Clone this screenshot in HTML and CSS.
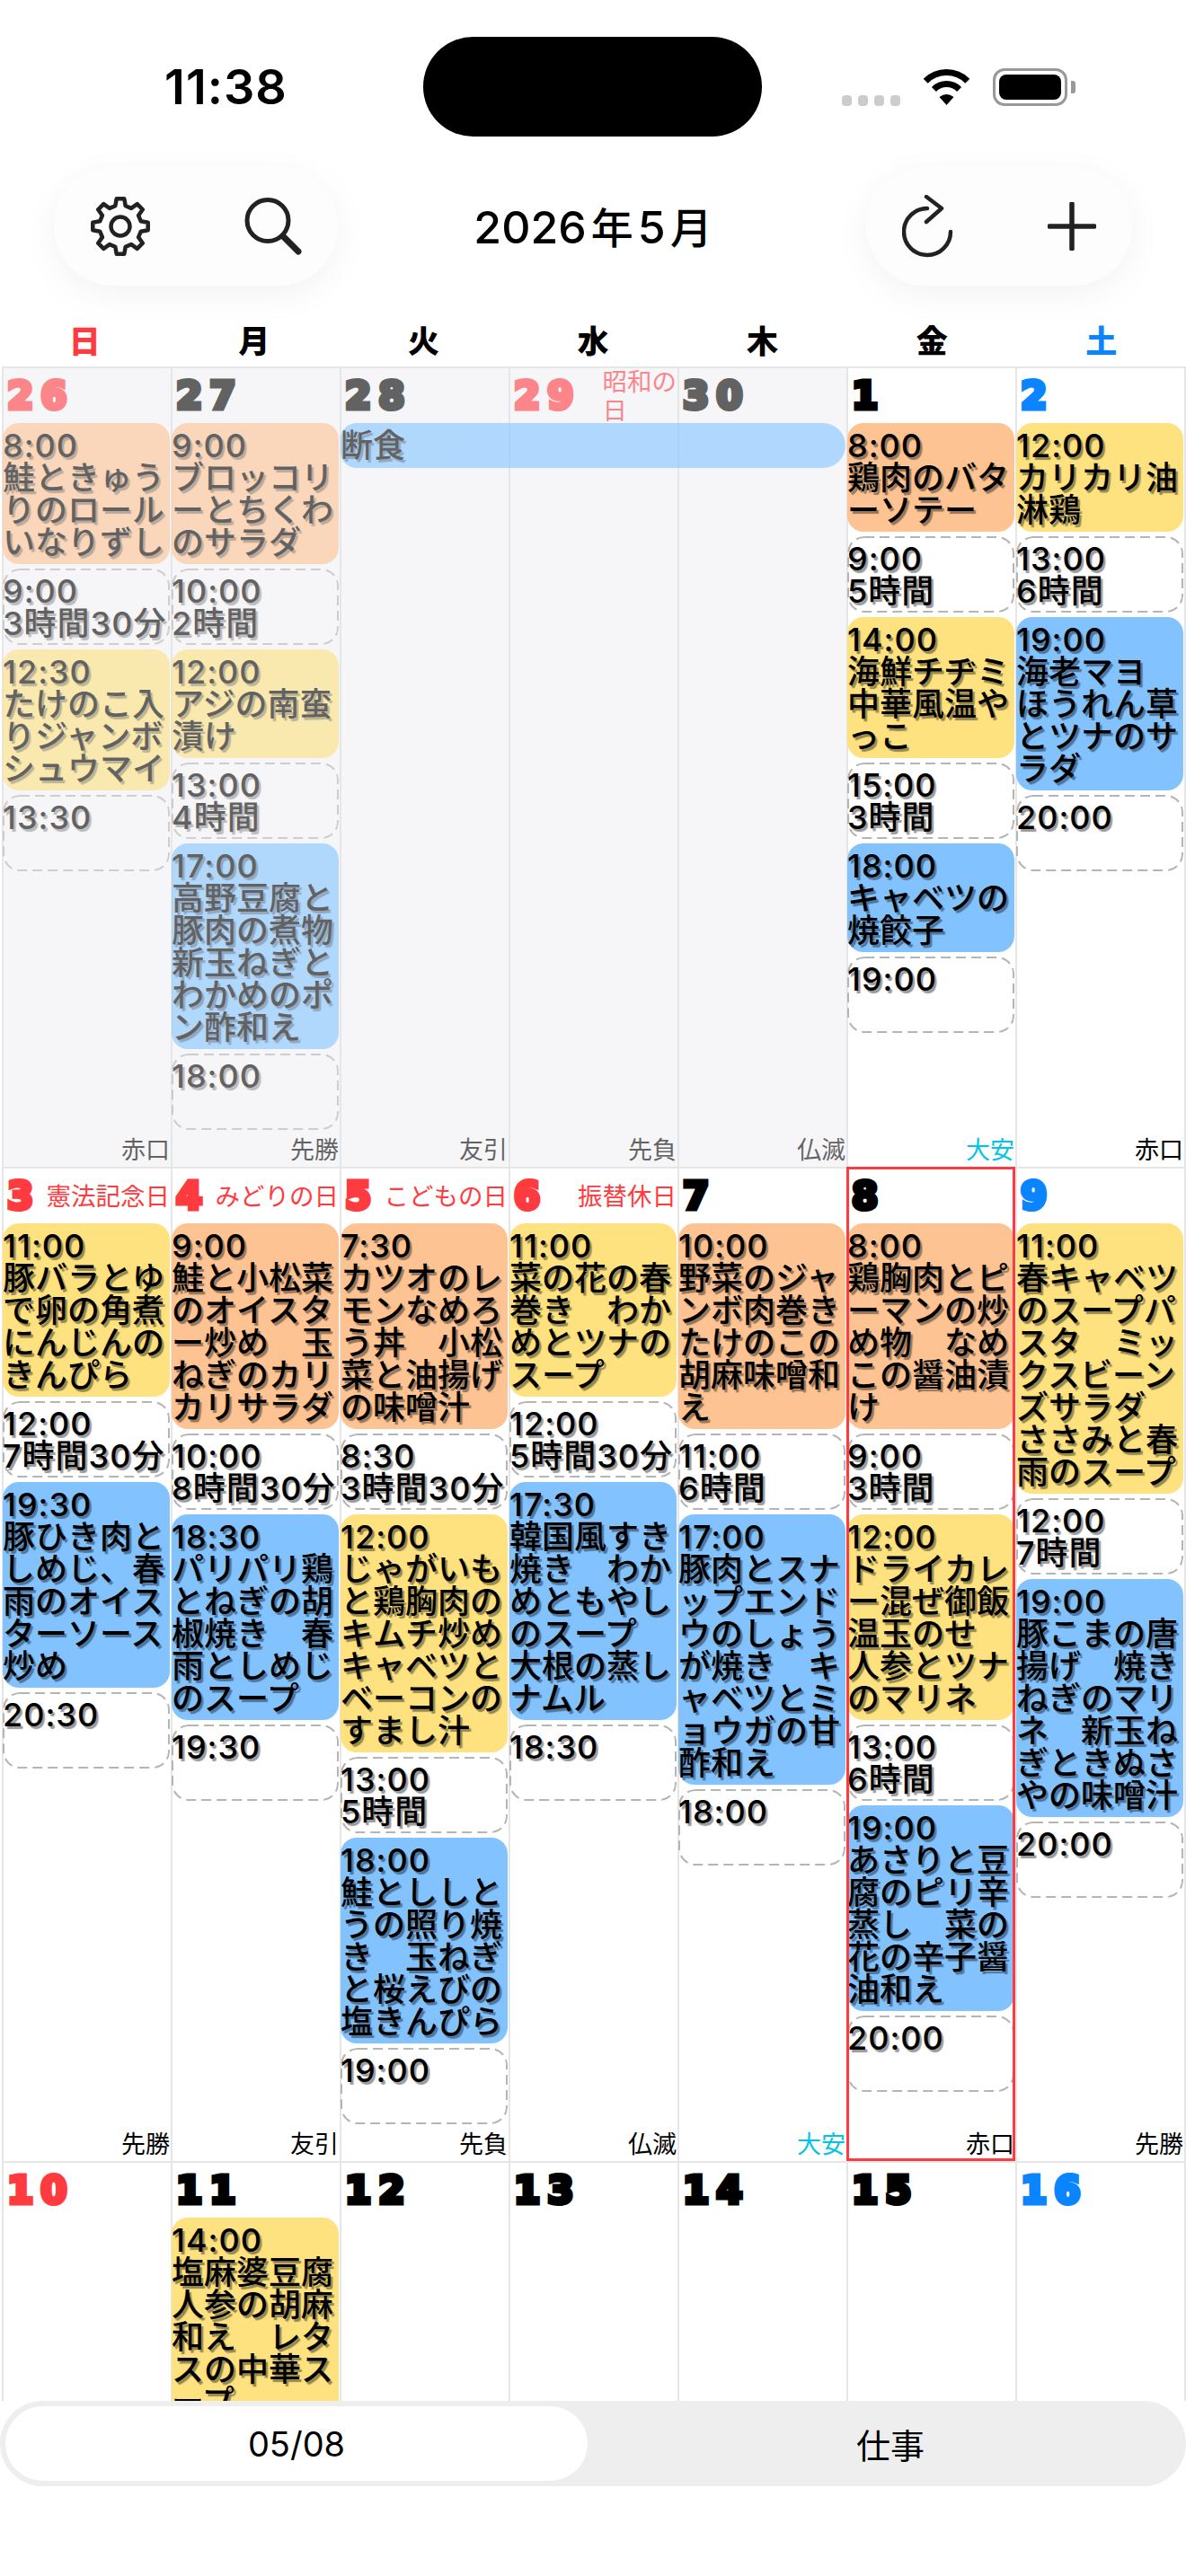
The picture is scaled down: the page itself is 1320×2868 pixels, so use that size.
FILE: index.html
```html
<!DOCTYPE html>
<html lang="ja">
<head>
  <meta charset="UTF-8">
  <meta name="viewport" content="width=device-width, initial-scale=1.0">
  <title>カレンダー</title>
  <link rel="stylesheet" href="styles.css">
</head>
<body>
  <div class="app">
    <!-- Status bar -->
    <div class="status">
      <div class="clock">11:38</div>
      <div class="island"></div>
      <div class="status-icons">
        <div class="signal"><i></i><i></i><i></i><i></i></div>
        <svg class="wifi" viewBox="0 0 57 41" width="57" height="41">
          <path d="M5.2 14.2A33 33 0 0 1 51.8 14.2M14.4 23.4A20 20 0 0 1 42.6 23.4" fill="none" stroke="#000" stroke-width="7"/>
          <path d="M28.5 41L20.5 32Q28.5 26 36.5 32Z" fill="#000"/>
        </svg>
        <div class="battery"><i></i></div>
        <div class="battery-cap"></div>
      </div>
    </div>

    <!-- Header -->
    <header class="topbar">
      <div class="pill">
        <svg viewBox="0 0 68 68" width="68" height="68" fill="none" stroke="#222" stroke-width="4.5" stroke-linejoin="round">
          <polygon points="39.7,11.2 38.3,3.3 29.7,3.3 28.3,11.2 21.9,13.9 15.3,9.2 9.2,15.3 13.9,21.9 11.2,28.3 3.3,29.7 3.3,38.3 11.2,39.7 13.9,46.1 9.2,52.7 15.3,58.8 21.9,54.1 28.3,56.8 29.7,64.7 38.3,64.7 39.7,56.8 46.1,54.1 52.7,58.8 58.8,52.7 54.1,46.1 56.8,39.7 64.7,38.3 64.7,29.7 56.8,28.3 54.1,21.9 58.8,15.3 52.7,9.2 46.1,13.9"/>
          <circle cx="34" cy="34" r="10.5"/>
        </svg>
        <svg viewBox="0 0 64 64" width="64" height="64" fill="none" stroke="#222" stroke-linecap="round">
          <circle cx="26" cy="25.500" r="23" stroke-width="5"/>
          <line x1="43" y1="43" x2="60" y2="60" stroke-width="7"/>
        </svg>
      </div>
      <h1 class="month">2026<span class="unit">年</span>5<span class="unit">月</span></h1>
      <div class="pill pill-right">
        <svg viewBox="0 0 58 70" width="58" height="70" fill="none" stroke="#222" stroke-width="4.500" stroke-linecap="round" stroke-linejoin="round">
          <path d="M28 15A26 26 0 1 0 54 41"/>
          <path d="M27 2L44 15L27 30"/>
        </svg>
        <svg viewBox="0 0 54 54" width="54" height="54" fill="none" stroke="#222" stroke-width="5.500" stroke-linecap="round">
          <path d="M27 2V52M2 27H52"/>
        </svg>
      </div>
    </header>

    <!-- Weekdays -->
    <div class="weekdays">
      <div class="sun">日</div><div>月</div><div>火</div><div>水</div><div>木</div><div>金</div><div class="sat">土</div>
    </div>

    <!-- Calendar -->
    <div class="calendar">
      <div class="cell past">
        <div class="head sun"><span class="num">26</span></div>
        <div class="ev orange"><div>8:00</div>鮭ときゅうりのロールいなりずし</div>
        <div class="ev slot"><div>9:00</div><div>3時間30分</div></div>
        <div class="ev yellow"><div>12:30</div>たけのこ入りジャンボシュウマイ</div>
        <div class="ev slot"><div>13:30</div></div>
        <div class="rokuyo">赤口</div>
      </div>
      <div class="cell past">
        <div class="head"><span class="num">27</span></div>
        <div class="ev orange"><div>9:00</div>ブロッコリーとちくわのサラダ</div>
        <div class="ev slot"><div>10:00</div><div>2時間</div></div>
        <div class="ev yellow"><div>12:00</div>アジの南蛮漬け</div>
        <div class="ev slot"><div>13:00</div><div>4時間</div></div>
        <div class="ev blue"><div>17:00</div>高野豆腐と豚肉の煮物新玉ねぎとわかめのポン酢和え</div>
        <div class="ev slot"><div>18:00</div></div>
        <div class="rokuyo">先勝</div>
      </div>
      <div class="cell past">
        <div class="head"><span class="num">28</span></div>
        <div class="banner">断食</div>
        <div class="rokuyo">友引</div>
      </div>
      <div class="cell past">
        <div class="head sun"><span class="num">29</span><span class="holiday">昭和の<br>日</span></div>
        <div class="rokuyo">先負</div>
      </div>
      <div class="cell past">
        <div class="head"><span class="num">30</span></div>
        <div class="rokuyo">仏滅</div>
      </div>
      <div class="cell">
        <div class="head"><span class="num">1</span></div>
        <div class="ev orange"><div>8:00</div>鶏肉のバターソテー</div>
        <div class="ev slot"><div>9:00</div><div>5時間</div></div>
        <div class="ev yellow"><div>14:00</div>海鮮チヂミ中華風温やっこ</div>
        <div class="ev slot"><div>15:00</div><div>3時間</div></div>
        <div class="ev blue"><div>18:00</div>キャベツの焼餃子</div>
        <div class="ev slot"><div>19:00</div></div>
        <div class="rokuyo taian">大安</div>
      </div>
      <div class="cell">
        <div class="head sat"><span class="num">2</span></div>
        <div class="ev yellow"><div>12:00</div>カリカリ油淋鶏</div>
        <div class="ev slot"><div>13:00</div><div>6時間</div></div>
        <div class="ev blue"><div>19:00</div>海老マヨ　ほうれん草とツナのサラダ</div>
        <div class="ev slot"><div>20:00</div></div>
        <div class="rokuyo">赤口</div>
      </div>

      <div class="cell">
        <div class="head sun"><span class="num">3</span><span class="holiday">憲法記念日</span></div>
        <div class="ev yellow"><div>11:00</div>豚バラとゆで卵の角煮にんじんのきんぴら</div>
        <div class="ev slot"><div>12:00</div><div>7時間30分</div></div>
        <div class="ev blue"><div>19:30</div>豚ひき肉としめじ、春雨のオイスターソース炒め</div>
        <div class="ev slot"><div>20:30</div></div>
        <div class="rokuyo">先勝</div>
      </div>
      <div class="cell">
        <div class="head sun"><span class="num">4</span><span class="holiday">みどりの日</span></div>
        <div class="ev orange"><div>9:00</div>鮭と小松菜のオイスター炒め　玉ねぎのカリカリサラダ</div>
        <div class="ev slot"><div>10:00</div><div>8時間30分</div></div>
        <div class="ev blue"><div>18:30</div>パリパリ鶏とねぎの胡椒焼き　春雨としめじのスープ</div>
        <div class="ev slot"><div>19:30</div></div>
        <div class="rokuyo">友引</div>
      </div>
      <div class="cell">
        <div class="head sun"><span class="num">5</span><span class="holiday">こどもの日</span></div>
        <div class="ev orange"><div>7:30</div>カツオのレモンなめろう丼　小松菜と油揚げの味噌汁</div>
        <div class="ev slot"><div>8:30</div><div>3時間30分</div></div>
        <div class="ev yellow"><div>12:00</div>じゃがいもと鶏胸肉のキムチ炒めキャベツとベーコンのすまし汁</div>
        <div class="ev slot"><div>13:00</div><div>5時間</div></div>
        <div class="ev blue"><div>18:00</div>鮭とししとうの照り焼き　玉ねぎと桜えびの塩きんぴら</div>
        <div class="ev slot"><div>19:00</div></div>
        <div class="rokuyo">先負</div>
      </div>
      <div class="cell">
        <div class="head sun"><span class="num">6</span><span class="holiday">振替休日</span></div>
        <div class="ev yellow"><div>11:00</div>菜の花の春巻き　わかめとツナのスープ</div>
        <div class="ev slot"><div>12:00</div><div>5時間30分</div></div>
        <div class="ev blue"><div>17:30</div>韓国風すき焼き　わかめともやしのスープ　大根の蒸しナムル</div>
        <div class="ev slot"><div>18:30</div></div>
        <div class="rokuyo">仏滅</div>
      </div>
      <div class="cell">
        <div class="head"><span class="num">7</span></div>
        <div class="ev orange"><div>10:00</div>野菜のジャンボ肉巻きたけのこの胡麻味噌和え</div>
        <div class="ev slot"><div>11:00</div><div>6時間</div></div>
        <div class="ev blue"><div>17:00</div>豚肉とスナップエンドウのしょうが焼き　キャベツとミョウガの甘酢和え</div>
        <div class="ev slot"><div>18:00</div></div>
        <div class="rokuyo taian">大安</div>
      </div>
      <div class="cell today">
        <div class="head"><span class="num">8</span></div>
        <div class="ev orange"><div>8:00</div>鶏胸肉とピーマンの炒め物　なめこの醤油漬け</div>
        <div class="ev slot"><div>9:00</div><div>3時間</div></div>
        <div class="ev yellow"><div>12:00</div>ドライカレー混ぜ御飯温玉のせ　人参とツナのマリネ</div>
        <div class="ev slot"><div>13:00</div><div>6時間</div></div>
        <div class="ev blue"><div>19:00</div>あさりと豆腐のピリ辛蒸し　菜の花の辛子醤油和え</div>
        <div class="ev slot"><div>20:00</div></div>
        <div class="rokuyo">赤口</div>
      </div>
      <div class="cell">
        <div class="head sat"><span class="num">9</span></div>
        <div class="ev yellow"><div>11:00</div>春キャベツのスープパスタ　ミックスビーンズサラダ　ささみと春雨のスープ</div>
        <div class="ev slot"><div>12:00</div><div>7時間</div></div>
        <div class="ev blue"><div>19:00</div>豚こまの唐揚げ　焼きねぎのマリネ　新玉ねぎときぬさやの味噌汁</div>
        <div class="ev slot"><div>20:00</div></div>
        <div class="rokuyo">先勝</div>
      </div>

      <div class="cell"><div class="head sun"><span class="num">10</span></div></div>
      <div class="cell">
        <div class="head"><span class="num">11</span></div>
        <div class="ev yellow"><div>14:00</div>塩麻婆豆腐人参の胡麻和え　レタスの中華スープ</div>
      </div>
      <div class="cell"><div class="head"><span class="num">12</span></div></div>
      <div class="cell"><div class="head"><span class="num">13</span></div></div>
      <div class="cell"><div class="head"><span class="num">14</span></div></div>
      <div class="cell"><div class="head"><span class="num">15</span></div></div>
      <div class="cell"><div class="head sat"><span class="num">16</span></div></div>
    </div>

    <!-- Segment control -->
    <div class="segment">
      <div class="seg-item active">05/08</div>
      <div class="seg-item seg-work">仕事</div>
    </div>
    <div class="home-space"></div>
  </div>
</body>
</html>
```

FILE: styles.css
```css
* {
  box-sizing: border-box;
}

body {
  margin: 0;
  background-color: white;
  color: black;
  font-family: Inter, "Noto Sans CJK JP", sans-serif;
}

.app {
  height: 2868px;
  display: flex;
  flex-direction: column;
  overflow: hidden;
}

/* Status bar */
.status {
  display: flex;
  align-items: center;
  padding-top: 41px;
  flex-shrink: 0;
}

.clock {
  width: 471px;
  padding-left: 32px;
  text-align: center;
  font-size: 54px;
  font-weight: 600;
  letter-spacing: 1px;
}

.island {
  width: 377px;
  height: 111px;
  background-color: black;
  border-radius: 56px;
}

.status-icons {
  display: flex;
  align-items: center;
  padding-left: 89px;
}

.signal {
  display: flex;
  gap: 7px;
  align-self: flex-end;
  margin-right: 23px;
}

.signal i {
  width: 11px;
  height: 12px;
  background-color: #ccc;
  border-radius: 4px;
}

.battery {
  width: 83px;
  height: 42px;
  margin-left: 23px;
  padding: 4px;
  border: 3px solid #999;
  border-radius: 13px;
}

.battery i {
  display: block;
  height: 100%;
  background-color: black;
  border-radius: 8px;
}

.battery-cap {
  width: 5px;
  height: 14px;
  margin-left: 4px;
  background-color: #999;
  border-radius: 0 3px 3px 0;
}

/* Header */
.topbar {
  display: grid;
  grid-template-columns: 1fr auto 1fr;
  align-items: center;
  margin-top: 34px;
  padding: 0 60px;
  flex-shrink: 0;
}

.pill {
  width: 316px;
  height: 132px;
  padding: 0 40px;
  display: flex;
  align-items: center;
  justify-content: space-between;
  background-color: #fdfdfd;
  border-radius: 66px;
  box-shadow: 0 10px 40px rgba(0, 0, 0, 0.05);
}

.pill-right {
  width: 296px;
  justify-self: end;
}

.month {
  margin: 0 0 3px;
  font-size: 50px;
  font-weight: 500;
  white-space: nowrap;
}

.unit {
  margin: 0 5px;
  font-size: 47px;
}

.unit:last-child {
  margin-right: 0;
}

.weekdays {
  display: grid;
  grid-template-columns: repeat(7, 1fr);
  margin-top: 37px;
  height: 53px;
  flex-shrink: 0;
  font-size: 35px;
  font-weight: 900;
  line-height: 50px;
  text-align: center;
}

.sun {
  color: #ff3b40;
}

.sat {
  color: #0a84ff;
}

/* Calendar */
.calendar {
  flex: 1;
  min-height: 0;
  overflow: hidden;
  display: grid;
  grid-template-columns: repeat(7, 188px);
  grid-auto-rows: max-content;
  padding: 0 2px;
}

.cell {
  min-width: 0;
  display: flex;
  flex-direction: column;
  border-top: 2px solid #e6e6e8;
  border-left: 2px solid #e6e6e8;
}

.cell:nth-child(7n) {
  border-right: 2px solid #e6e6e8;
  margin-right: -2px;
}

.past {
  background-color: #f6f6f9;
}

.past > * {
  opacity: 0.6;
}

.today {
  outline: 3px solid #ff3b40;
  outline-offset: -3px;
  z-index: 1;
}

.head {
  height: 61px;
  flex-shrink: 0;
  display: flex;
  align-items: center;
  justify-content: space-between;
  padding: 0 1px 0 4px;
}

.num {
  flex-shrink: 0;
  font-family: "DejaVu Sans", sans-serif;
  font-size: 42px;
  font-weight: 700;
  line-height: 1;
  letter-spacing: 8px;
  -webkit-text-stroke: 5px currentColor;
}

.holiday {
  margin-left: auto;
  font-size: 27.5px;
  line-height: 32px;
}

.ev {
  margin: 0 1px 5px -1px;
  padding: 7px 0 6px;
  font-size: 36px;
  font-weight: 500;
  line-height: 36px;
  word-break: break-all;
  line-break: anywhere;
  text-shadow: 2.5px 2.5px 1px rgba(0, 0, 0, 0.4);
  border-radius: 18px;
}

.ev div {
  letter-spacing: 1px;
  white-space: nowrap;
}

.orange {
  background-color: #fdc392;
}

.yellow {
  background-color: #fee27f;
}

.blue {
  background-color: #82c3ff;
}

/* free time between meals, every slot is the same size */
.slot {
  height: 85px;
  background: url("data:image/svg+xml,%3Csvg xmlns='http://www.w3.org/2000/svg' width='186' height='85'%3E%3Crect x='1' y='1' width='184' height='83' rx='18' fill='none' stroke='%23b5b5b5' stroke-width='2' stroke-dasharray='11 6'/%3E%3C/svg%3E") no-repeat;
}

.banner {
  width: 562px;
  height: 50px;
  margin-left: -1px;
  background-color: #82c3ff;
  border-radius: 18px 25px 25px 18px;
  font-size: 36px;
  font-weight: 500;
  line-height: 50px;
  text-shadow: 2.5px 2.5px 1px rgba(0, 0, 0, 0.4);
}

.rokuyo {
  margin-top: auto;
  height: 36px;
  padding-right: 1px;
  font-size: 27px;
  line-height: 36px;
  text-align: right;
}

.taian {
  color: #00c4e8;
}

/* Segment control */
.segment {
  flex-shrink: 0;
  height: 95px;
  padding: 6px;
  display: grid;
  grid-template-columns: 648px 1fr;
  background-color: #eee;
  border-radius: 48px;
}

.seg-item {
  display: flex;
  align-items: center;
  justify-content: center;
  font-size: 38px;
  border-radius: 42px;
}

.seg-item.active {
  background-color: white;
}

.seg-work {
  padding-left: 14px;
}

.home-space {
  height: 100px;
  flex-shrink: 0;
}
```
